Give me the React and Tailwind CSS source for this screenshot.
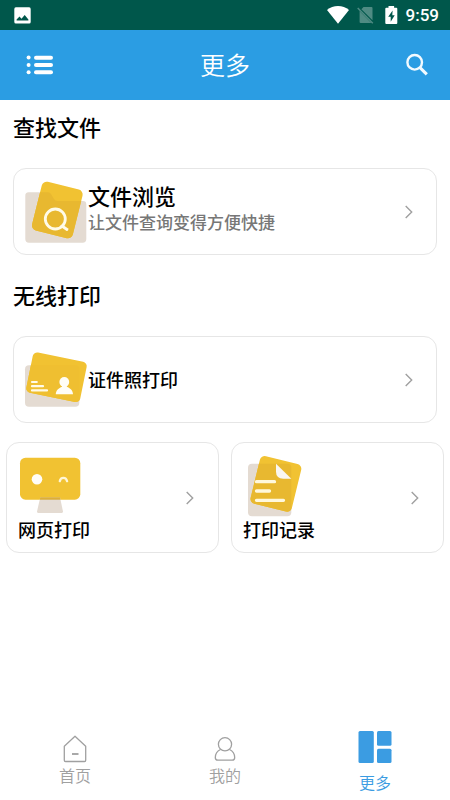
import { useState } from "react";

const GRAY = "#e4dbd2";
const YELLOW = "#f1c232";

function StatusBar() {
    return (
        <div className="h-[30px] bg-[#00574b] flex items-center justify-between pl-[14px] pr-[11px] text-white">
            <svg width="17" height="17" viewBox="0 0 17 17">
                <rect x="0.3" y="0.3" width="16.4" height="16.2" rx="1.6" fill="#fff" />
                <path d="M2.6 13.6v-1l2.9-3 2 2.2L10.7 8l3.7 4.6v1z" fill="#00574b" />
            </svg>
            <div className="flex items-center">
                <svg width="22" height="18" viewBox="0 0 22 18">
                    <path d="M0 4C3 1.500 7 0 11 0s8 1.500 11 4L11 17.700z" fill="#fff" />
                </svg>
                <svg className="ml-2" width="17" height="18" viewBox="0 0 17 18">
                    <path d="M6.500 1H14.500a1 1 0 0 1 1 1v12.200L4.400 3.200zM2.600 5l11.800 12H3.600a1 1 0 0 1-1-1z" fill="#4f8b83" />
                    <path d="M0.700 2L15.800 17.300" stroke="#4f8b83" strokeWidth="1.500" />
                </svg>
                <svg className="ml-[11px]" width="13" height="18" viewBox="0 0 13 18">
                    <path d="M3.500 0h5.600v1.800h2.200a1 1 0 0 1 1 1V17a1 1 0 0 1-1 1H1.300a1 1 0 0 1-1-1V2.800a1 1 0 0 1 1-1h2.200z" fill="#fff" />
                    <path d="M7.600 4.500L3.200 10.800h2.500v5L9.700 9.200H7.300z" fill="#00574b" />
                </svg>
                <span className="ml-2 text-[17px] leading-6 font-medium font-[Roboto,sans-serif]">9:59</span>
            </div>
        </div>
    );
}

function Header() {
    return (
        <header className="h-[70px] bg-[#2b9de3] flex items-center justify-between px-6 text-white">
            <button type="button" aria-label="菜单">
                <svg width="32" height="32" viewBox="0 0 32 32" fill="#fff">
                    <circle cx="4.600" cy="8.600" r="2" />
                    <circle cx="4.600" cy="16" r="2" />
                    <circle cx="4.600" cy="23.300" r="2" />
                    <rect x="10" y="6.700" width="19" height="4" rx="2" />
                    <rect x="10" y="14" width="19" height="4" rx="2" />
                    <rect x="10" y="21.300" width="19" height="4" rx="2" />
                </svg>
            </button>
            <h1 className="pb-0.5 text-[25px] leading-8 font-[350]">更多</h1>
            <button type="button" aria-label="搜索">
                <svg width="32" height="32" viewBox="0 0 32 32" fill="none" stroke="#f2faff" className="overflow-visible">
                    <circle cx="20.700" cy="13.300" r="7.300" strokeWidth="2.400" />
                    <path d="M26 18.600l6.800 6.800" strokeWidth="3" />
                </svg>
            </button>
        </header>
    );
}

function FolderIcon() {
    const back = "M4.700 12.300H24q2 0 3 1.800L30 19q1.200 2 3.200 2H59a3.300 3.300 0 0 1 3.300 3.300V59a3.700 3.700 0 0 1-3.700 3.700H5A3.700 3.700 0 0 1 1.300 59V16a3.500 3.500 0 0 1 3.400-3.700z";
    return (
        <svg width="64" height="64" viewBox="0 0 64 64" className="shrink-0">
            <defs>
                <clipPath id="folder-front">
                    <rect x="12.300" y="5" width="42" height="50" rx="5" transform="rotate(14 33.300 30)" />
                </clipPath>
            </defs>
            <path d={back} fill={GRAY} />
            <g clipPath="url(#folder-front)">
                <rect width="64" height="64" fill={YELLOW} />
                <path d={back} fill="#e8b830" />
            </g>
            <circle cx="31.300" cy="39" r="10" fill="none" stroke="#fffbe8" strokeWidth="2.800" />
            <path d="M38 46l5 3.500" stroke="#fffbe8" strokeWidth="2.800" strokeLinecap="round" />
        </svg>
    );
}

function CardIcon() {
    return (
        <svg width="64" height="64" viewBox="0 0 64 64" className="shrink-0">
            <defs>
                <clipPath id="card-front">
                    <rect x="5" y="8.800" width="55" height="41" rx="4.500" transform="rotate(11.500 32.600 29.300)" />
                </clipPath>
            </defs>
            <rect x="1" y="17.300" width="54.300" height="41.400" rx="4" fill={GRAY} />
            <g clipPath="url(#card-front)">
                <rect width="64" height="64" fill={YELLOW} />
                <rect x="1" y="17.300" width="54.300" height="41.400" rx="4" fill="#efbf31" />
            </g>
            <path d="M8 34h4.800M8 38.200h11M8 42.400h15" stroke="#fffbe8" strokeWidth="2.200" strokeLinecap="round" />
            <circle cx="40.300" cy="34" r="4.900" fill="#fffdf5" />
            <path d="M31.800 46.300c0-4 3-6.300 6.200-7.600v-2h4.800v2c3.300 1.300 6.200 3.600 6.200 7.600z" fill="#fffdf5" />
        </svg>
    );
}

function MonitorIcon() {
    return (
        <svg width="64" height="64" viewBox="0 0 64 64">
            <rect x="2" y="4.700" width="60.300" height="42" rx="5.500" fill={YELLOW} />
            <path d="M22.300 44.300H42l3 14.200q.2 1.500-1.200 1.500H20.200q-1.400 0-1.200-1.500z" fill={GRAY} />
            <path d="M22.300 44.300H42l.5 2.400H21.800z" fill="#dcae3a" />
            <circle cx="19" cy="26.300" r="5.300" fill="#fffdf8" />
            <path d="M41.800 28.200c.8-4.500 6.300-4.500 7.300 0" fill="none" stroke="#fff6d6" strokeWidth="2.300" strokeLinecap="round" />
        </svg>
    );
}

function RecordIcon() {
    return (
        <svg width="64" height="64" viewBox="0 0 64 64">
            <defs>
                <clipPath id="record-front">
                    <rect x="11.700" y="6.300" width="42.500" height="49" rx="5" transform="rotate(13.700 32.800 30.700)" />
                </clipPath>
            </defs>
            <rect x="5" y="10.700" width="43.300" height="52.500" rx="4" fill={GRAY} />
            <g clipPath="url(#record-front)">
                <rect width="64" height="64" fill={YELLOW} />
                <rect x="5" y="10.700" width="43.300" height="52.500" rx="4" fill="#e8b830" />
            </g>
            <path d="M33 10.700l15.300 15h-8q-7.300-.4-7.300-7z" fill="#faf7f2" />
            <path d="M13.500 28.700h18M13.500 38h13M13.500 47.300h27" stroke="#fff8dc" strokeWidth="3.300" strokeLinecap="round" />
        </svg>
    );
}

function Arrow() {
    return (
        <svg width="8" height="14" viewBox="0 0 8 14" fill="none" stroke="#a0a0a0" strokeWidth="1.400" className="shrink-0">
            <path d="M0.700 1l6 6-6 6" />
        </svg>
    );
}

function WideCard({ icon, title, desc }) {
    return (
        <button type="button" className="w-full h-[87px] border border-[#e6e6e6] rounded-[13px] pl-[10px] pr-[23px] flex items-center text-left">
            {icon}
            {desc ? (
                <span className="flex-1 flex flex-col pb-[10px]">
                    <span className="text-[22px] leading-[30px] font-medium">{title}</span>
                    <span className="text-[17px] leading-6 font-medium text-[#777]">{desc}</span>
                </span>
            ) : (
                <span className="flex-1 pb-0.5 text-[18px] leading-6 font-medium">{title}</span>
            )}
            <Arrow />
        </button>
    );
}

function SmallCard({ icon, title }) {
    return (
        <button type="button" className="h-[111px] border border-[#e6e6e6] rounded-[13px] pl-[11px] pr-6 flex items-center justify-between text-left">
            <span className="flex flex-col pb-0.5">
                {icon}
                <span className="text-[18px] leading-6 font-medium">{title}</span>
            </span>
            <Arrow />
        </button>
    );
}

const tabs = [
    {
        key: "home",
        label: "首页",
        icon: (
            <svg width="24" height="28" viewBox="0 0 24 28" fill="none" stroke="currentColor" strokeWidth="1.300" strokeLinejoin="round">
                <path d="M1.300 11.200L12 1.200l10.700 10V25.300a1.200 1.200 0 0 1-1.200 1.200h-19a1.200 1.200 0 0 1-1.200-1.200z" />
                <path d="M9 19h6.500" strokeWidth="1.800" />
            </svg>
        ),
    },
    {
        key: "mine",
        label: "我的",
        icon: (
            <svg width="24" height="28" viewBox="0 0 24 28" fill="none" stroke="currentColor" strokeWidth="1.300" strokeLinejoin="round">
                <circle cx="12" cy="9.300" r="6.600" />
                <path d="M7.500 14.500C4.500 16 2.300 18.500 2.300 22.500c0 1.700.8 2.700 2.500 2.700h14.400c1.700 0 2.500-1 2.500-2.700 0-4-2.200-6.500-5.200-8" />
            </svg>
        ),
    },
    {
        key: "more",
        label: "更多",
        icon: (
            <svg width="34" height="34" viewBox="0 0 34 34" fill="currentColor">
                <rect x="0.500" y="1" width="15.300" height="32" rx="1.500" />
                <rect x="19" y="1" width="14.500" height="14.700" rx="1.500" />
                <rect x="19" y="18.700" width="14.500" height="14.300" rx="1.500" />
            </svg>
        ),
    },
];

function App() {
    const [tab, setTab] = useState("more");

    return (
        <div className="min-h-screen flex flex-col bg-white text-black font-['Noto_Sans_CJK_SC',sans-serif]">
            <StatusBar />
            <Header />
            <main className="flex-1">
                <section className="px-[13px]">
                    <h2 className="h-[53px] mb-[15px] flex items-center text-[22px] font-medium">查找文件</h2>
                    <WideCard icon={<FolderIcon />} title="文件浏览" desc="让文件查询变得方便快捷" />
                </section>
                <section className="px-[13px] mt-[13px]">
                    <h2 className="h-[53px] mb-[15px] flex items-center text-[22px] font-medium">无线打印</h2>
                    <WideCard icon={<CardIcon />} title="证件照打印" />
                </section>
                <div className="grid grid-cols-2 gap-3 px-[6px] mt-[19px]">
                    <SmallCard icon={<MonitorIcon />} title="网页打印" />
                    <SmallCard icon={<RecordIcon />} title="打印记录" />
                </div>
            </main>
            <nav className="h-[76px] grid grid-cols-3">
                {tabs.map((item) => (
                    <button
                        key={item.key}
                        type="button"
                        onClick={() => setTab(item.key)}
                        className={`flex flex-col items-center justify-center font-[350] ${tab === item.key ? "text-[#3b9ce2] gap-1.5" : "text-[#a0a0a0] pb-0.5"}`}
                    >
                        {item.icon}
                        <span className="text-[16px] leading-6">{item.label}</span>
                    </button>
                ))}
            </nav>
        </div>
    );
}

export default App;
